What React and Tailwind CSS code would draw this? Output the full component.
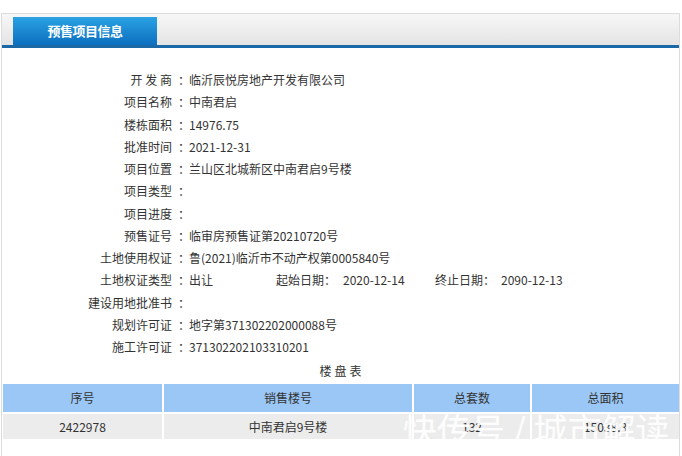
import React from 'react';

const rows = [
  { label: '开 发 商', value: '临沂辰悦房地产开发有限公司' },
  { label: '项目名称', value: '中南君启' },
  { label: '楼栋面积', value: '14976.75' },
  { label: '批准时间', value: '2021-12-31' },
  { label: '项目位置', value: '兰山区北城新区中南君启9号楼' },
  { label: '项目类型', value: '' },
  { label: '项目进度', value: '' },
  { label: '预售证号', value: '临审房预售证第20210720号' },
  { label: '土地使用权证', value: '鲁(2021)临沂市不动产权第0005840号' },
  { label: '土地权证类型', value: 'dates' },
  { label: '建设用地批准书', value: '' },
  { label: '规划许可证', value: '地字第371302202000088号' },
  { label: '施工许可证', value: '371302202103310201' },
];

const App = () => {
  return (
    <div
      className="relative w-[682px] h-[456px] overflow-hidden bg-white pt-[13px] text-[12px] text-[#333]"
      style={{ fontFamily: '"Noto Sans CJK SC", "Noto Sans", sans-serif' }}
    >
      <div className="ml-[1px] w-[679px] h-[460px] border border-[#dcdcdc] border-b-0">
        {/* tab header */}
        <div className="h-[31px] bg-gradient-to-b from-[#f7f7f7] to-[#e4e4e4] flex items-end pl-[11px]">
          <div className="w-[144px] h-[28px] bg-gradient-to-b from-[#2ba2e4] to-[#0b6fbf] flex items-center justify-center text-white font-bold text-[13px] tracking-[-0.5px]">
            预售项目信息
          </div>
        </div>
        <div className="h-[3px] bg-[#1a68a6]" />

        {/* info rows */}
        <div className="pt-[21px]">
          {rows.map((row, i) => (
            <div key={i} className="flex items-center h-[22.25px]">
              <div className="w-[170px] text-right whitespace-pre">{row.label}</div>
              <div className="ml-[6px] w-[11px] overflow-visible whitespace-nowrap">：</div>
              <div className="flex">
                {row.value === 'dates' ? (
                  <>
                    <span className="w-[87px]">出让</span>
                    <span className="w-[67px] whitespace-nowrap">起始日期：</span>
                    <span className="w-[92px]">2020-12-14</span>
                    <span className="w-[66px] whitespace-nowrap">终止日期：</span>
                    <span>2090-12-13</span>
                  </>
                ) : (
                  row.value
                )}
              </div>
            </div>
          ))}
        </div>

        <div className="h-[24px] flex items-center justify-center tracking-[3px] pl-[3px] mt-[1px]">楼盘表</div>

        {/* table */}
        <div className="flex gap-[2px] pl-[1px] mt-[1px]">
          <div className="w-[159px] h-[28px] bg-[#9ac7f6] flex items-center justify-center">序号</div>
          <div className="w-[248px] h-[28px] bg-[#9ac7f6] flex items-center justify-center">销售楼号</div>
          <div className="w-[116px] h-[28px] bg-[#9ac7f6] flex items-center justify-center">总套数</div>
          <div className="w-[147px] h-[28px] bg-[#9ac7f6] flex items-center justify-center">总面积</div>
        </div>
        <div className="flex gap-[2px] pl-[1px] mt-[2px]">
          <div className="w-[159px] h-[25px] bg-[#ececec] flex items-center justify-center">2422978</div>
          <div className="w-[248px] h-[25px] bg-[#ececec] flex items-center justify-center">中南君启9号楼</div>
          <div className="w-[116px] h-[25px] bg-[#ececec] flex items-center justify-center">132</div>
          <div className="w-[147px] h-[25px] bg-[#ececec] flex items-center justify-center">15038.3</div>
        </div>
      </div>

      {/* watermark */}
      <div className="absolute left-[403px] top-[412px] text-[34px] leading-none text-white/90 whitespace-pre">
        快传号 / 城市解读
      </div>
    </div>
  );
};

export default App;
